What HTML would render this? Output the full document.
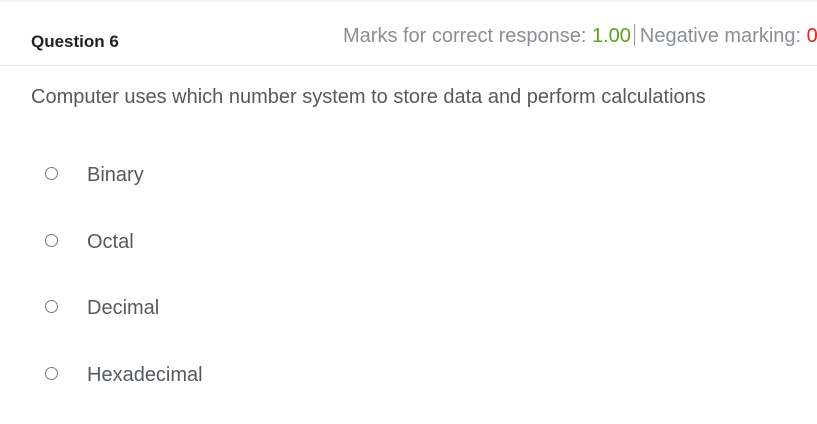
<!DOCTYPE html>
<html><head><style>
body{margin:0;width:817px;height:424px;background:#fff;font-family:"Liberation Sans",sans-serif;position:relative;overflow:hidden}
.top{position:absolute;left:0;top:0;width:817px;height:3px;background:linear-gradient(#eee,#fff)}
.q{position:absolute;left:31px;top:32px;font-size:17px;font-weight:bold;color:#222}
.marks{position:absolute;left:343px;top:24px;font-size:20px;color:#8a8f94;white-space:nowrap}
.g{color:#5aa51c}.r{color:#e0261b}
.sep{display:inline-block;width:1px;height:22px;background:#999;vertical-align:-4px;margin:0 5px 0 3px}
.hr{position:absolute;left:0;top:65px;width:817px;height:1px;background:#e2e2e2}
.txt{position:absolute;left:31px;top:86px;font-size:20px;color:#555a5f}
.opt{position:absolute;left:87px;font-size:20px;color:#555a5f}
.rad{position:absolute;left:45px;width:11px;height:11px;border:1px solid #777;border-radius:50%}
</style></head><body>
<div class="top"></div>
<div class="q">Question 6</div>
<div class="marks">Marks for correct response: <span class="g">1.00</span><span class="sep"></span>Negative marking: <span class="r">0</span></div>
<div class="hr"></div>
<div class="txt">Computer uses which number system to store data and perform calculations</div>
<div class="rad" style="top:167px"></div><div class="opt" style="top:164px">Binary</div>
<div class="rad" style="top:234px"></div><div class="opt" style="top:231px">Octal</div>
<div class="rad" style="top:300px"></div><div class="opt" style="top:297px">Decimal</div>
<div class="rad" style="top:367px"></div><div class="opt" style="top:364px">Hexadecimal</div>
</body></html>
